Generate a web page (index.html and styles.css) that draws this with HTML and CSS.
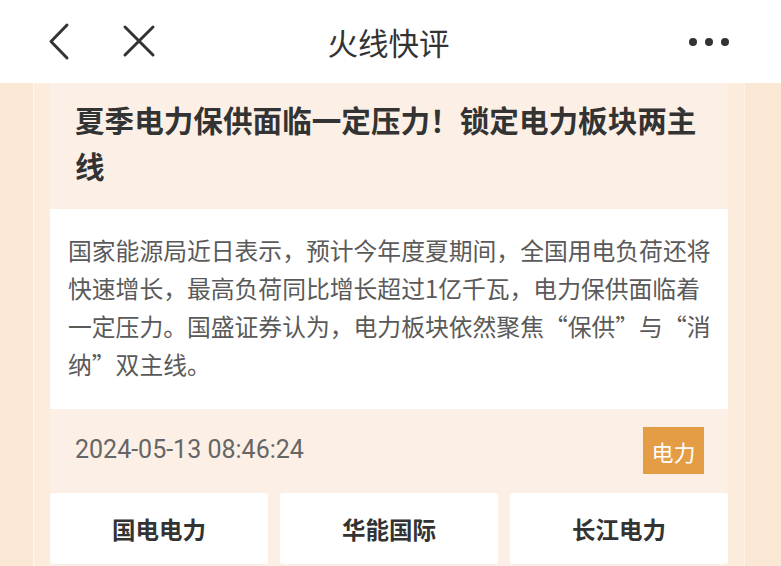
FILE: index.html
```html
<!DOCTYPE html>
<html lang="zh-CN">
<head>
  <meta charset="UTF-8">
  <meta name="viewport" content="width=device-width, initial-scale=1.0">
  <title>火线快评</title>
  <link rel="stylesheet" href="styles.css">
</head>
<body>

  <header class="topbar">
    <div class="topbar-left">
      <svg class="icon-back" width="24" height="40" viewBox="0 0 24 40">
        <polyline points="19,3 3,19.5 19,36" fill="none" stroke="#333" stroke-width="3" stroke-linecap="round" stroke-linejoin="round"/>
      </svg>
      <svg class="icon-close" width="34" height="34" viewBox="0 0 34 34">
        <path d="M3 3 L31 31 M31 3 L3 31" fill="none" stroke="#333" stroke-width="3" stroke-linecap="round"/>
      </svg>
    </div>
    <div class="topbar-title">火线快评</div>
    <div class="topbar-right">
      <span class="dot"></span><span class="dot"></span><span class="dot"></span>
    </div>
  </header>

  <main class="page">
    <div class="feed">
      <article class="card">
        <h1 class="card-title">夏季电力保供面临一定压力！锁定电力板块两主线</h1>
        <p class="card-body">国家能源局近日表示，预计今年度夏期间，全国用电负荷还将快速增长，最高负荷同比增长超过1亿千瓦，电力保供面临着一定压力。国盛证券认为，电力板块依然聚焦“保供”与“消纳”双主线。</p>
        <div class="card-meta">
          <span class="card-time">2024-05-13 08:46:24</span>
          <span class="tag">电力</span>
        </div>
        <div class="stocks">
          <div class="stock">国电电力</div>
          <div class="stock">华能国际</div>
          <div class="stock">长江电力</div>
        </div>
      </article>
    </div>
  </main>

</body>
</html>
```

FILE: styles.css
```css
* {
  box-sizing: border-box;
}
body {
  margin: 0;
  font-family: 'Noto Sans CJK SC', 'Noto Sans', sans-serif;
  background-color: #fae8d5;
  color: #333333;
  overflow: hidden;
}
.topbar {
  height: 83px;
  background-color: #ffffff;
  display: grid;
  grid-template-columns: 1fr auto 1fr;
  align-items: center;
  padding: 0 52px 0 48px;
}
.topbar-left {
  display: flex;
  align-items: center;
  gap: 50px;
  padding-top: 1px;
}
.icon-back {
  display: block;
}
.icon-close {
  display: block;
  margin-top: -3px;
}
.topbar-title {
  font-size: 30.5px;
  color: #333333;
  padding-top: 0;
}
.topbar-right {
  display: flex;
  justify-content: flex-end;
  gap: 8px;
}
.dot {
  width: 8px;
  height: 8px;
  border-radius: 50%;
  background-color: #333333;
}
.page {
  padding: 0 36px 0 33px;
}
.feed {
  background-color: #fcecdc;
  border-left: 1px solid #fff6ee;
  border-right: 1px solid #fff3e8;
  padding: 0 16px;
}
.card {
  background-color: #fcf0e6;
  padding-bottom: 6px;
}
.card-title {
  margin: 0;
  padding: 14px 20px 20px 25px;
  font-size: 29.6px;
  line-height: 46px;
  font-weight: bold;
  color: #333333;
}
.card-body {
  margin: 0;
  background-color: #ffffff;
  padding: 22px 16px 26px 18px;
  font-family: 'Noto Sans CJK SC', sans-serif;
  font-size: 23.8px;
  line-height: 38px;
  color: #5a5a5a;
}
.card-meta {
  display: flex;
  align-items: center;
  justify-content: space-between;
  padding: 18px 24px 19px 25px;
}
.card-time {
  font-family: Roboto, sans-serif;
  font-size: 25px;
  color: #666666;
  margin-top: -2px;
}
.tag {
  background-color: #e49c45;
  color: #ffffff;
  font-size: 22px;
  width: 61px;
  height: 47px;
  display: flex;
  align-items: center;
  justify-content: center;
}
.stocks {
  display: grid;
  grid-template-columns: 1fr 1fr 1fr;
  gap: 12px;
}
.stock {
  background-color: #ffffff;
  border-radius: 3px;
  height: 71px;
  display: flex;
  align-items: center;
  justify-content: center;
  font-size: 23.5px;
  font-weight: bold;
  color: #333333;
}
```
